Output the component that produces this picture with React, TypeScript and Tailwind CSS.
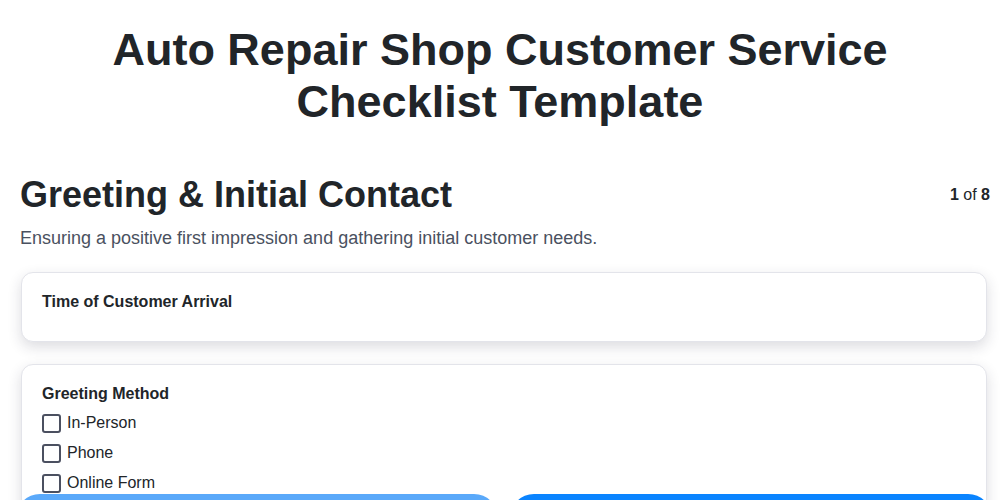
import React from "react";

const options = ["In-Person", "Phone", "Online Form"];

function Checkbox({ label }: { label: string }) {
  return (
    <label className="flex items-center gap-[6px] h-[30px] text-[16px] text-[#212529]">
      <span className="w-[19px] h-[19px] rounded-[3px] border-2 border-[#4b5060] bg-white" />
      <span>{label}</span>
    </label>
  );
}

export default function App() {
  return (
    <div className="min-h-screen bg-white font-['Liberation_Sans',Arial,sans-serif] text-[#212529]">
      <h1 className="pt-[24px] text-center text-[45px] leading-[52px] font-bold px-10">
        Auto Repair Shop Customer Service
        <br />
        Checklist Template
      </h1>

      <div className="mt-[45px] pl-5 pr-[10px] flex items-center justify-between">
        <h2 className="text-[36px] leading-[44px] font-bold">Greeting &amp; Initial Contact</h2>
        <div className="text-[16px]">
          <span className="font-bold">1</span> of <span className="font-bold">8</span>
        </div>
      </div>
      <p className="pl-5 mt-[8px] text-[18px] leading-[26px] text-[#4a5160]">
        Ensuring a positive first impression and gathering initial customer needs.
      </p>

      <div className="ml-[21px] mr-[13px] mt-[21px] flex flex-col gap-[22px] pb-24">
        <div className="h-[70px] rounded-[12px] border border-[#e3e4ea] bg-white px-5 pt-[19px] shadow-[0_5px_14px_rgba(40,40,60,0.16)]">
          <div className="text-[16px] font-bold leading-[20px]">Time of Customer Arrival</div>
        </div>
        <div className="rounded-[12px] border border-[#e3e4ea] bg-white px-5 pt-[19px] pb-5 shadow-[0_5px_14px_rgba(40,40,60,0.16)]">
          <div className="text-[16px] font-bold leading-[20px] mb-[4px]">Greeting Method</div>
          {options.map((o) => (
            <Checkbox key={o} label={o} />
          ))}
        </div>
      </div>

      {/* bottom navigation, pinned to the viewport edge */}
      <div className="fixed inset-x-0 bottom-[-44px] flex gap-3 pl-4 pr-2">
        <button aria-label="Previous" className="flex-1 h-[50px] rounded-[24px] bg-[#5aa9fa]" />
        <button aria-label="Next" className="flex-1 h-[50px] rounded-[24px] bg-[#0a84ff]" />
      </div>
    </div>
  );
}
